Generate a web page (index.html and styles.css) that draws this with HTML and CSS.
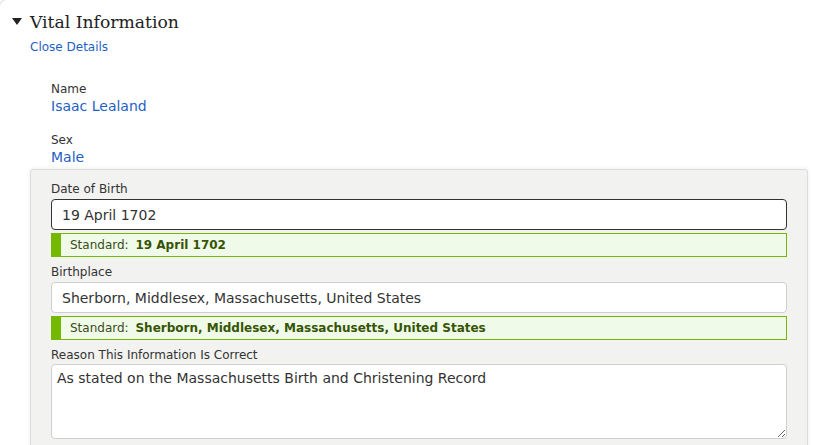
FILE: index.html
```html
<!DOCTYPE html>
<html lang="en">
<head>
    <meta charset="UTF-8">
    <title>Vital Information</title>
    <link rel="stylesheet" href="styles.css">
</head>
<body>
<div class="card">
    <h2 class="title">
        <svg class="caret" width="10" height="7" viewBox="0 0 10 7"><path d="M0 0 L10 0 L5 7 Z" fill="#222"/></svg>
        Vital Information
    </h2>
    <a class="close" href="#">Close Details</a>

    <div class="facts">
        <div class="fact">
            <div class="label">Name</div>
            <div class="value">Isaac Lealand</div>
        </div>
        <div class="fact">
            <div class="label">Sex</div>
            <div class="value">Male</div>
        </div>
    </div>

    <div class="panel">
        <label class="label" for="dob">Date of Birth</label>
        <input type="text" id="dob" class="field focused" value="19 April 1702">
        <div class="standard">Standard: <b>19 April 1702</b></div>

        <label class="label" for="place">Birthplace</label>
        <input type="text" id="place" class="field" value="Sherborn, Middlesex, Massachusetts, United States">
        <div class="standard">Standard: <b>Sherborn, Middlesex, Massachusetts, United States</b></div>

        <label class="label" for="reason">Reason This Information Is Correct</label>
        <textarea id="reason" class="field reason">As stated on the Massachusetts Birth and Christening Record</textarea>
    </div>
</div>
</body>
</html>
```

FILE: styles.css
```css
body{
    margin: 0;
    background: #fff;
    color: #333;
    font-family: "DejaVu Sans", Verdana, sans-serif;
    overflow: hidden;
}
.card{
    border-top-left-radius: 8px;
    border-left: 1px solid #e4e4e4;
    border-top: 1px solid #e4e4e4;
    height: 460px;
    margin-top: -1px;
    margin-left: -1px;
}
.title{
    display: flex;
    align-items: center;
    gap: 8px;
    margin: 10px 0 0 12px;
    font-family: "DejaVu Serif", Georgia, serif;
    font-weight: normal;
    font-size: 17.2px;
    line-height: 24px;
    color: #222;
}
.caret{
    margin-top: -2px;
}
.close{
    display: block;
    margin: 5px 0 0 30px;
    font-size: 12px;
    line-height: 16px;
    color: #1f5fc4;
    text-decoration: none;
}
.facts{
    padding: 26px 0 0 51px;
}
.fact{
    margin-bottom: 17px;
}
.fact:last-child{
    margin-bottom: 0;
}
.label{
    display: block;
    font-size: 12px;
    line-height: 16px;
    color: #333;
}
.value{
    font-size: 14px;
    line-height: 18px;
    color: #1f5fc4;
}
.panel{
    margin: 3px 0 0 30px;
    width: 778px;
    box-sizing: border-box;
    padding: 11px 20px 20px;
    background: #f2f2f0;
    border: 1px solid #dcdcda;
    border-radius: 3px;
    box-shadow: 0 0 4px rgba(0,0,0,0.08);
}
.field{
    display: block;
    box-sizing: border-box;
    width: 100%;
    height: 31px;
    margin-top: 2px;
    padding: 0 10px;
    font-family: "DejaVu Sans", Verdana, sans-serif;
    font-size: 14px;
    color: #333;
    background: #fff;
    border: 1px solid #cfcfcf;
    border-radius: 4px;
    outline: none;
}
.field.focused{
    border-color: #333;
}
.standard{
    margin: 3px 0 7px;
    height: 24px;
    box-sizing: border-box;
    padding-left: 9px;
    font-size: 12px;
    line-height: 22px;
    color: #3b4a20;
    background: #effbe8;
    border: 1px solid #74b800;
    border-left: 10px solid #74b800;
}
.standard b{
    margin-left: 3px;
    color: #365404;
}
.reason{
    height: 75px;
    margin-top: 1px;
    padding: 4px 5px;
    resize: vertical;
    line-height: 18px;
}
```
